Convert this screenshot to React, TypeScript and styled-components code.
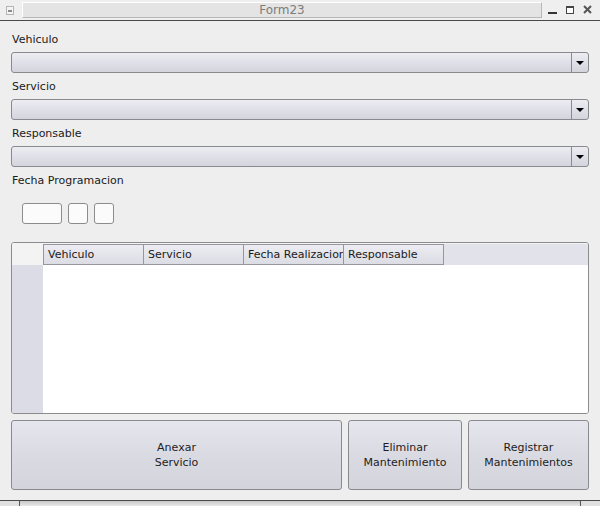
import React from 'react';
import styled, { createGlobalStyle } from 'styled-components';

const GlobalStyle = createGlobalStyle`
  html, body {
    margin: 0;
    padding: 0;
    background: #eeeeee;
  }
  body {
    font-family: "DejaVu Sans", "Liberation Sans", sans-serif;
    font-size: 11px;
    color: #1a1a1a;
  }
`

const Window = styled.div`
  width: 600px;
  height: 506px;
  display: flex;
  flex-direction: column;
  background: #eeeeee;
  overflow: hidden;
`

const TitleBar = styled.div`
  height: 20px;
  flex: none;
  display: flex;
  align-items: center;
  padding-left: 6px;
  border-bottom: 1px solid #4a4a4a;
  background: #efefef;
`

const TitleField = styled.div`
  flex: 1;
  height: 14px;
  margin-left: 8px;
  margin-top: -1px;
  border: 1px solid;
  border-color: #ffffff #b8b8b8 #b8b8b8 #ffffff;
  background: #e4e4e4;
  color: #7c7c7c;
  font-size: 12px;
  line-height: 14px;
  text-align: center;
`

const Controls = styled.div`
  display: flex;
  align-items: center;
  gap: 9px;
  padding: 0 8px 0 6px;
`

const Content = styled.div`
  flex: 1;
  display: flex;
  flex-direction: column;
  padding: 5px 11px 0;
`

const Label = styled.div`
  height: 26px;
  box-sizing: border-box;
  padding-top: 7px;
  line-height: 13px;
  padding-left: 1px;
`

const Combo = styled.div`
  height: 21px;
  box-sizing: border-box;
  display: flex;
  border: 1px solid #8a8a8e;
  border-radius: 3px;
  background: linear-gradient(#ececf2, #d4d4de);
`

const ComboText = styled.div`
  flex: 1;
`

const ComboArrow = styled.div`
  width: 16px;
  border-left: 1px solid #8a8a8e;
  display: flex;
  align-items: center;
  justify-content: center;
  &::after {
    content: '';
    border-left: 4px solid transparent;
    border-right: 4px solid transparent;
    border-top: 4px solid #000;
    margin-top: 1px;
  }
`

const DateRow = styled.div`
  display: flex;
  gap: 6px;
  margin: 10px 0 0 11px;
  height: 21px;
`

const DateBox = styled.div<{ w: number }>`
  width: ${p => p.w}px;
  height: 21px;
  box-sizing: border-box;
  border: 1px solid #8c8c8c;
  border-radius: 3px;
  background: #fbfbfb;
`

const Table = styled.div`
  margin-top: 18px;
  height: 172px;
  box-sizing: border-box;
  border: 1px solid #8c8c8e;
  border-radius: 3px;
  overflow: hidden;
  display: grid;
  grid-template-columns: 31px 1fr;
  grid-template-rows: 22px 1fr;
  background: #ffffff;
`

const Corner = styled.div`
  background: #f3f3f3;
`

const HeaderBand = styled.div`
  background: #f3f3f3;
  padding-top: 1px;
`

const HeaderRow = styled.div`
  display: flex;
  height: 21px;
  background: #e2e2ea;
`

const HeaderCell = styled.div<{ last?: boolean }>`
  width: ${p => p.last ? 101 : 100}px;
  box-sizing: border-box;
  border: 1px solid #96969c;
  border-right: ${p => p.last ? '1px solid #96969c' : 'none'};
  background: linear-gradient(#ececf2, #dcdce4);
  padding-left: 4px;
  line-height: 19px;
  white-space: nowrap;
  overflow: hidden;
`

const RowHeader = styled.div`
  background: #dcdce6;
`

const Body = styled.div`
  background: #ffffff;
`

const Buttons = styled.div`
  margin-top: 6px;
  height: 70px;
  display: grid;
  grid-template-columns: 1fr 114px 121px;
  gap: 6px;
`

const Button = styled.div`
  box-sizing: border-box;
  border: 1px solid #8a8a8e;
  border-radius: 3px;
  background: linear-gradient(#e6e6ee, #dadae2 50%, #d4d4dc);
  display: flex;
  align-items: center;
  justify-content: center;
  text-align: center;
  line-height: 15px;
  color: #1e1e1e;
`

const Footer = styled.div`
  height: 5px;
  flex: none;
  display: grid;
  grid-template-columns: 19px 1fr 19px;
  border-top: 1px solid #4a4a4a;
  background: #e0e0e0;
`

const FooterMid = styled.div`
  border-left: 1px solid #555;
  border-right: 1px solid #555;
  background: linear-gradient(#c8c8c8, #e8e8e8);
`

const AppIcon = () => (
  <svg width="8" height="9" viewBox="0 0 8 9">
    <rect x="0" y="0" width="8" height="9" fill="#b4b4b4" />
    <rect x="1" y="1" width="6" height="7" fill="#f4f4f4" />
    <rect x="2" y="4" width="4" height="2" fill="#8a8a8a" />
  </svg>
)

const MinIcon = () => (
  <svg width="9" height="10" viewBox="0 0 9 10">
    <rect x="0" y="7" width="9" height="2" fill="#333" />
  </svg>
)

const MaxIcon = () => (
  <svg width="8" height="10" viewBox="0 0 8 10">
    <rect x="0.5" y="1.5" width="7" height="7" fill="#fff" stroke="#444" />
    <rect x="0" y="1" width="8" height="2" fill="#444" />
  </svg>
)

const CloseIcon = () => (
  <svg width="9" height="10" viewBox="0 0 9 10">
    <path d="M1 1 L8 8 M8 1 L1 8" stroke="#555" strokeWidth="2" />
  </svg>
)

const fields = ['Vehiculo', 'Servicio', 'Responsable']
const columns = ['Vehiculo', 'Servicio', 'Fecha Realizacion', 'Responsable']

const App = () => {
  return (
    <>
      <GlobalStyle />
      <Window>
        <TitleBar>
          <AppIcon />
          <TitleField>Form23</TitleField>
          <Controls>
            <MinIcon />
            <MaxIcon />
            <CloseIcon />
          </Controls>
        </TitleBar>
        <Content>
          {fields.map(name => (
            <React.Fragment key={name}>
              <Label>{name}</Label>
              <Combo>
                <ComboText />
                <ComboArrow />
              </Combo>
            </React.Fragment>
          ))}
          <Label>Fecha Programacion</Label>
          <DateRow>
            <DateBox w={40} />
            <DateBox w={20} />
            <DateBox w={20} />
          </DateRow>
          <Table>
            <Corner />
            <HeaderBand>
              <HeaderRow>
                {columns.map((col, i) => (
                  <HeaderCell key={col} last={i === columns.length - 1}>{col}</HeaderCell>
                ))}
              </HeaderRow>
            </HeaderBand>
            <RowHeader />
            <Body />
          </Table>
          <Buttons>
            <Button>Anexar<br />Servicio</Button>
            <Button>Eliminar<br />Mantenimiento</Button>
            <Button>Registrar<br />Mantenimientos</Button>
          </Buttons>
        </Content>
        <Footer>
          <div />
          <FooterMid />
          <div />
        </Footer>
      </Window>
    </>
  );
};

export default App;
